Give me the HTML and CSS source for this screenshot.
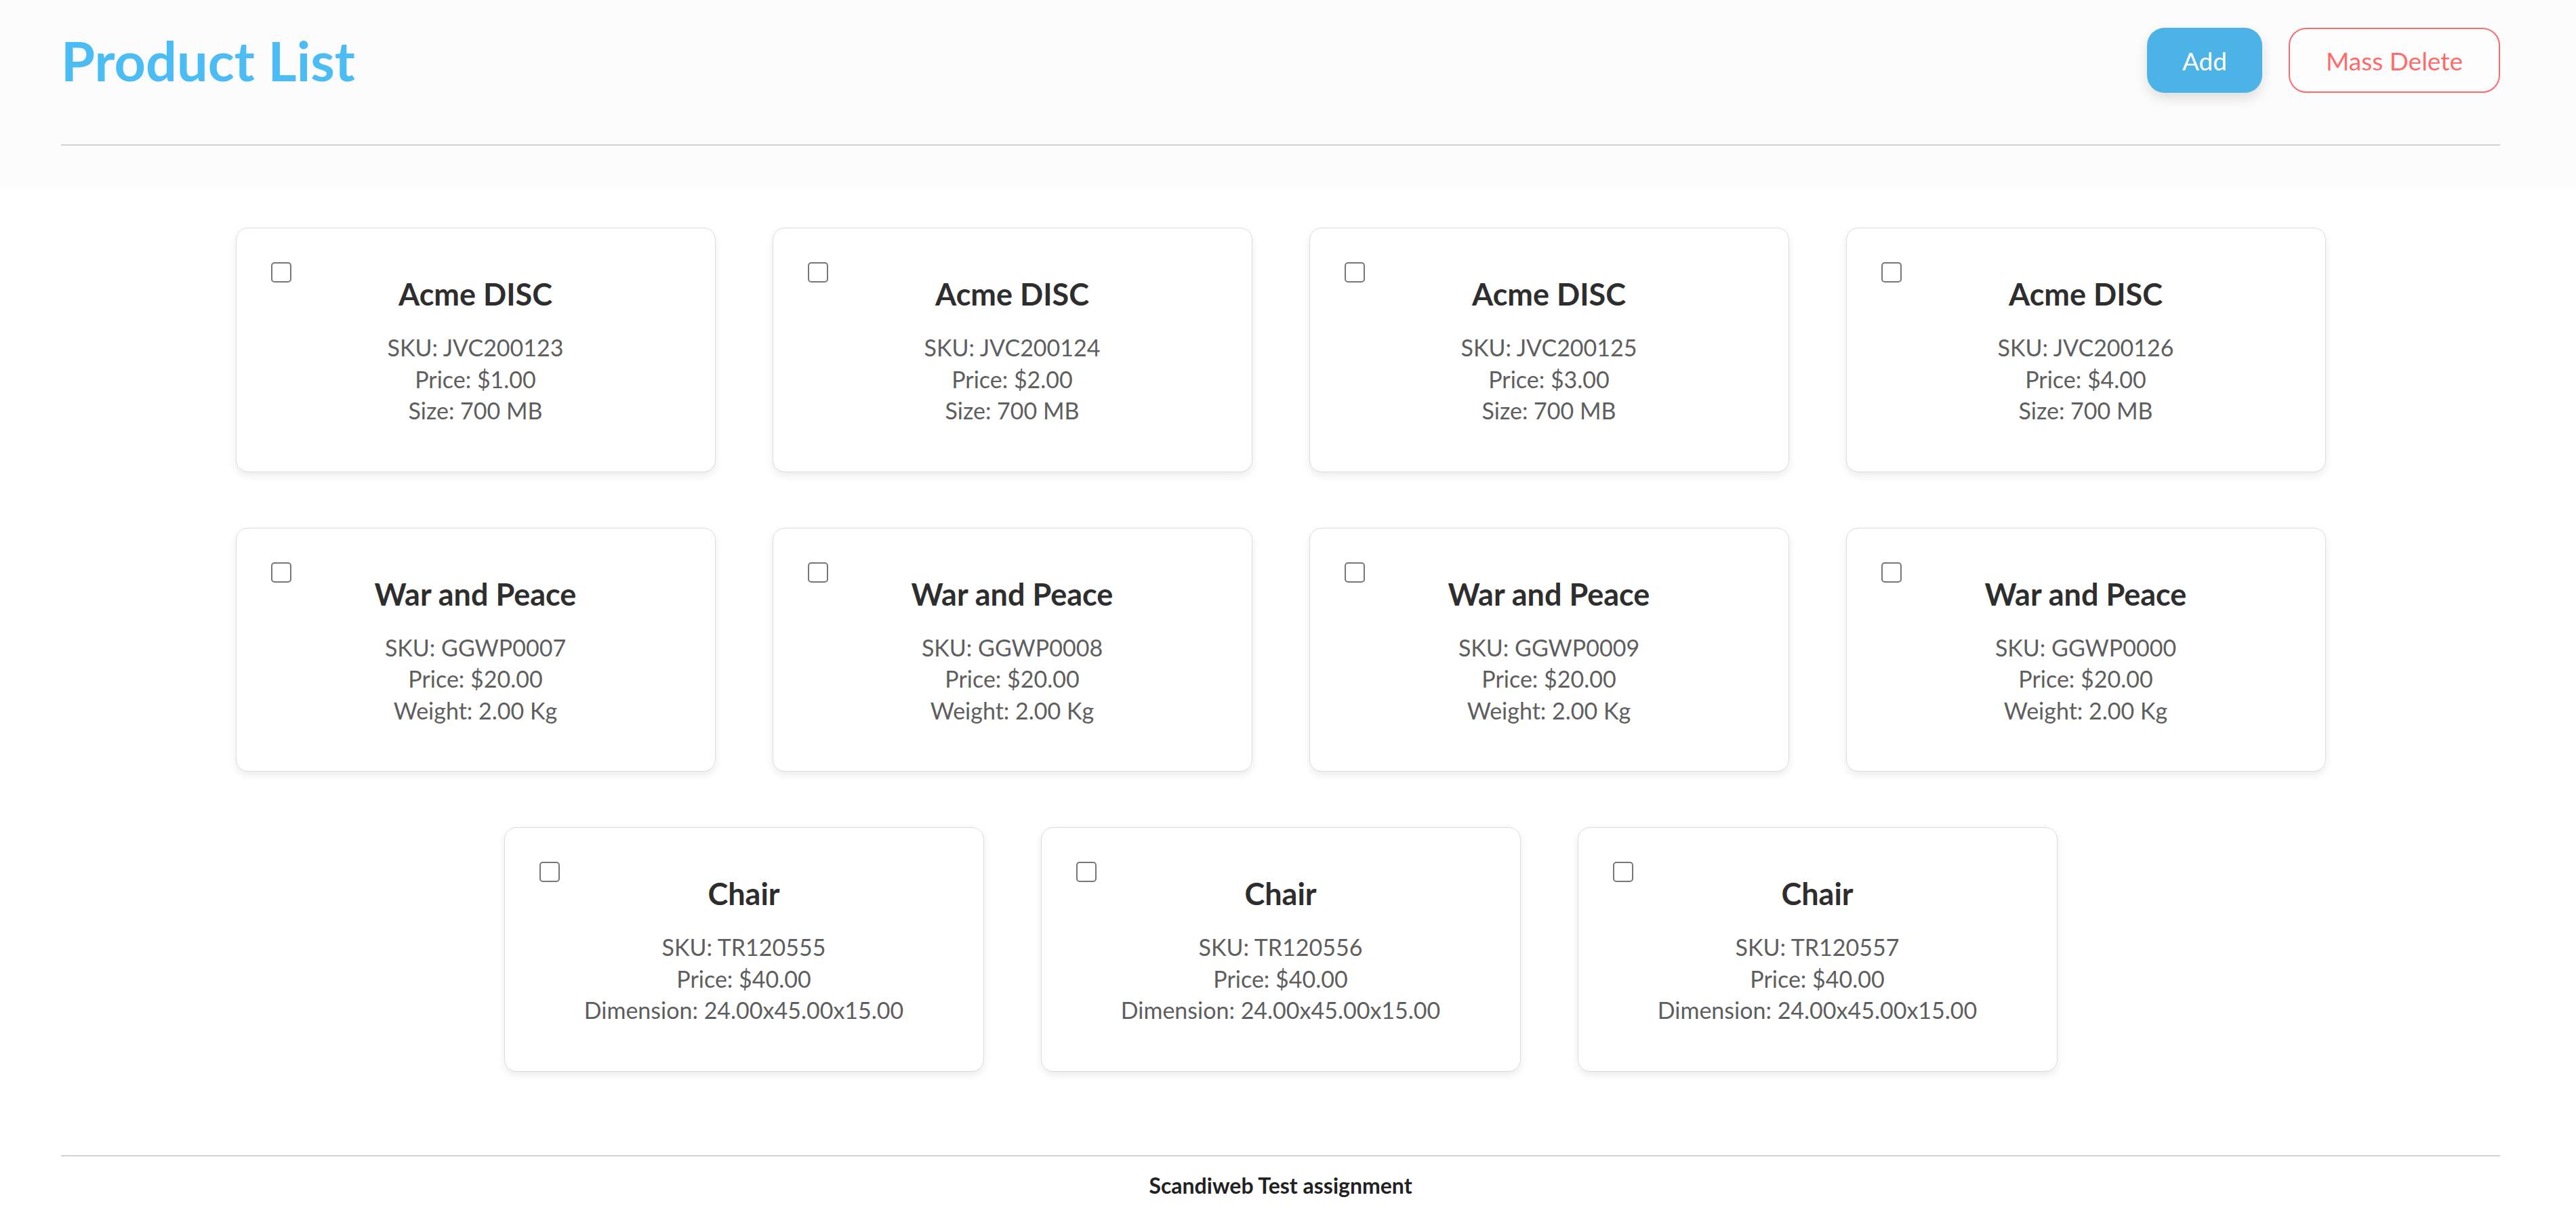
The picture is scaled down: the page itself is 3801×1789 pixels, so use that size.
FILE: index.html
```html
<!DOCTYPE html>
<html lang="en">
<head>
<meta charset="utf-8">
<title>Product List</title>
<link rel="stylesheet" href="styles.css">
</head>
<body>
<header class="page-header">
  <div class="header-row">
    <h1 class="title">Product List</h1>
    <div class="actions">
      <button class="btn btn-add" type="button">Add</button>
      <button class="btn btn-delete" type="button">Mass Delete</button>
    </div>
  </div>
  <hr class="rule">
</header>

<main class="products">
  <div class="card"><input class="delete-checkbox" type="checkbox"><h2 class="name">Acme DISC</h2><div class="info"><p>SKU: JVC200123</p><p>Price: $1.00</p><p>Size: 700 MB</p></div></div>
  <div class="card"><input class="delete-checkbox" type="checkbox"><h2 class="name">Acme DISC</h2><div class="info"><p>SKU: JVC200124</p><p>Price: $2.00</p><p>Size: 700 MB</p></div></div>
  <div class="card"><input class="delete-checkbox" type="checkbox"><h2 class="name">Acme DISC</h2><div class="info"><p>SKU: JVC200125</p><p>Price: $3.00</p><p>Size: 700 MB</p></div></div>
  <div class="card"><input class="delete-checkbox" type="checkbox"><h2 class="name">Acme DISC</h2><div class="info"><p>SKU: JVC200126</p><p>Price: $4.00</p><p>Size: 700 MB</p></div></div>

  <div class="card"><input class="delete-checkbox" type="checkbox"><h2 class="name">War and Peace</h2><div class="info"><p>SKU: GGWP0007</p><p>Price: $20.00</p><p>Weight: 2.00 Kg</p></div></div>
  <div class="card"><input class="delete-checkbox" type="checkbox"><h2 class="name">War and Peace</h2><div class="info"><p>SKU: GGWP0008</p><p>Price: $20.00</p><p>Weight: 2.00 Kg</p></div></div>
  <div class="card"><input class="delete-checkbox" type="checkbox"><h2 class="name">War and Peace</h2><div class="info"><p>SKU: GGWP0009</p><p>Price: $20.00</p><p>Weight: 2.00 Kg</p></div></div>
  <div class="card"><input class="delete-checkbox" type="checkbox"><h2 class="name">War and Peace</h2><div class="info"><p>SKU: GGWP0000</p><p>Price: $20.00</p><p>Weight: 2.00 Kg</p></div></div>

  <div class="card"><input class="delete-checkbox" type="checkbox"><h2 class="name">Chair</h2><div class="info"><p>SKU: TR120555</p><p>Price: $40.00</p><p>Dimension: 24.00x45.00x15.00</p></div></div>
  <div class="card"><input class="delete-checkbox" type="checkbox"><h2 class="name">Chair</h2><div class="info"><p>SKU: TR120556</p><p>Price: $40.00</p><p>Dimension: 24.00x45.00x15.00</p></div></div>
  <div class="card"><input class="delete-checkbox" type="checkbox"><h2 class="name">Chair</h2><div class="info"><p>SKU: TR120557</p><p>Price: $40.00</p><p>Dimension: 24.00x45.00x15.00</p></div></div>
</main>

<footer class="page-footer">
  <hr class="rule">
  <p class="footer-text">Scandiweb Test assignment</p>
</footer>
</body>
</html>
```
FILE: styles.css
```css
* { box-sizing: border-box; }

html, body {
  margin: 0;
  padding: 0;
  background: #ffffff;
  font-family: Lato, "Open Sans", "Liberation Sans", sans-serif;
}

.page-header {
  background: #fcfcfc;
  padding: 41px 112px 0 90px;
  height: 275px;
}

.header-row {
  display: flex;
  justify-content: space-between;
  align-items: flex-start;
  height: 96px;
}

.title {
  margin: 0;
  font-size: 81px;
  line-height: 96px;
  font-weight: 700;
  color: #4cbdf4;
}

.actions {
  display: flex;
  gap: 39px;
}

.btn {
  height: 96px;
  border-radius: 26px;
  font-family: inherit;
  font-size: 37px;
  cursor: pointer;
  padding: 0;
}

.btn-add {
  width: 170px;
  background: #4bb3e6;
  color: #ffffff;
  border: none;
  box-shadow: 0 8px 18px rgba(0, 0, 0, 0.12);
}

.btn-delete {
  width: 312px;
  background: #fdfdfd;
  color: #ff6b6b;
  border: 2px solid #ff6b6b;
}

.rule {
  margin: 0;
  border: none;
  height: 2px;
  background: #d2d2d2;
}

.page-header .rule {
  margin-top: 76px;
}

.products {
  margin: 0 112px 0 90px;
  padding: 20px 0 0;
  display: flex;
  flex-wrap: wrap;
  justify-content: center;
}

.card {
  position: relative;
  width: 708px;
  margin: 41px 42px;
  padding: 70px 20px 66px;
  background: #ffffff;
  border: 1px solid #dcdcdc;
  border-radius: 18px;
  box-shadow: 0 5px 12px rgba(0, 0, 0, 0.08);
  text-align: center;
}

.delete-checkbox {
  position: absolute;
  top: 50px;
  left: 51px;
  margin: 0;
  width: 30px;
  height: 30px;
  appearance: none;
  -webkit-appearance: none;
  background: #ffffff;
  border: 2.5px solid #777777;
  border-radius: 5px;
}

.name {
  margin: 0;
  font-size: 45px;
  line-height: 54px;
  font-weight: 700;
  color: #2e2e2e;
}

.info {
  margin-top: 29px;
}

.info p {
  margin: 0;
  font-size: 34px;
  line-height: 46.5px;
  color: #5e5e5e;
}

.page-footer {
  margin: 82px 112px 0 90px;
}

.footer-text {
  margin: 24px 0 0;
  text-align: center;
  font-size: 32px;
  line-height: 38px;
  font-weight: 700;
  color: #222222;
}
```
